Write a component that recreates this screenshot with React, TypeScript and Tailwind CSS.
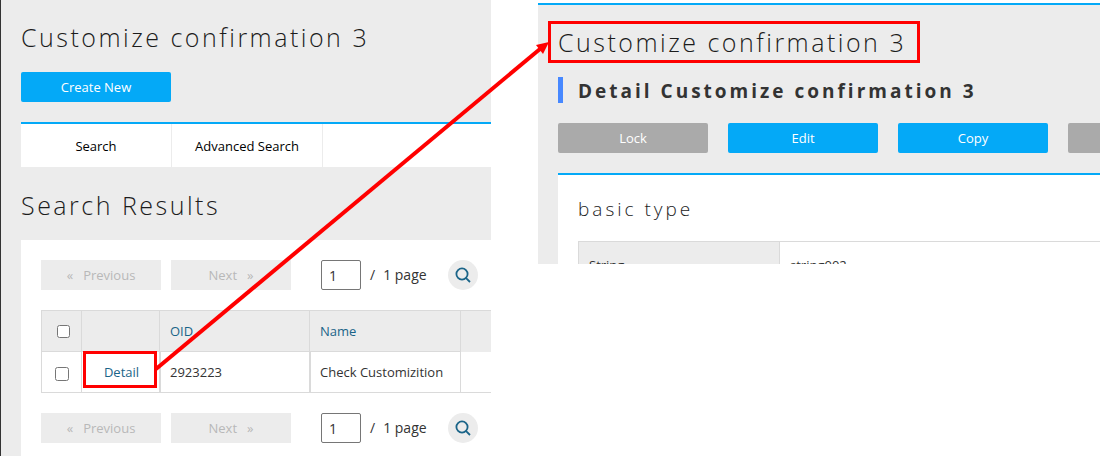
import type { ReactNode } from "react";

function PageTitle({ children }: { children: ReactNode }) {
  return (
    <h1 className="text-[25px] leading-8 font-light tracking-widest whitespace-nowrap text-[#1c1c1c]">
      {children}
    </h1>
  );
}

function ActionButton({ children, muted = false }: { children: ReactNode; muted?: boolean }) {
  return (
    <button
      type="button"
      className={`h-[30px] w-[150px] shrink-0 rounded-[2px] pt-0.5 text-[13px] text-white ${muted ? "bg-[#aaa]" : "bg-[#04a9f7]"}`}
    >
      {children}
    </button>
  );
}

function Pager({ id }: { id: string }) {
  return (
    <nav aria-label={`Pages ${id}`} className="flex h-[30px] items-center text-[13px]">
      <button type="button" disabled className="flex h-[30px] w-[120px] items-center justify-center gap-[10px] bg-[#ececec] pt-0.5 text-[#b8b8b8]">
        <span>«</span>
        <span>Previous</span>
      </button>
      <button type="button" disabled className="ml-[10px] flex h-[30px] w-[120px] items-center justify-center gap-[10px] bg-[#ececec] pt-0.5 text-[#b8b8b8]">
        <span>Next</span>
        <span>»</span>
      </button>
      <input
        id={`page-${id}`}
        type="text"
        aria-label="Page number"
        defaultValue="1"
        className="ml-[30px] h-[30px] w-10 rounded-[2px] border border-[#767676] bg-white px-[7px] text-sm text-[#333]"
      />
      <label htmlFor={`page-${id}`} className="ml-[9px] flex w-[78px] gap-2 text-sm whitespace-nowrap text-[#333]">
        <span>/</span>
        <span>1 page</span>
      </label>
      <button type="button" aria-label="Go to page" className="flex size-[30px] items-center justify-center rounded-full bg-[#ececec]">
        <svg viewBox="0 0 16 16" className="size-4 fill-none stroke-[#1a6488]" strokeWidth="1.8">
          <circle cx="7" cy="7" r="5.6" />
          <path d="M10.6 10.6L15 15" />
        </svg>
      </button>
    </nav>
  );
}

function ListScreen() {
  return (
    <section className="flex min-h-screen min-w-0 flex-col overflow-hidden border-l border-[#333] bg-[#ececec] pl-5">
      <div className="pt-[21px]">
        <PageTitle>Customize confirmation 3</PageTitle>
      </div>
      <div className="mt-[19px] flex">
        <ActionButton>Create New</ActionButton>
      </div>
      <div className="mt-5 flex border-t-2 border-[#04a9f7] bg-white text-[13px] text-black">
        <button type="button" className="h-[43px] w-[151px] border-r border-[#ececec] pt-0.5">Search</button>
        <button type="button" className="h-[43px] w-[151px] border-r border-[#ececec] pt-0.5">Advanced Search</button>
      </div>
      <h2 className="mt-[22px] text-[25px] leading-8 font-light tracking-widest text-[#1c1c1c]">Search Results</h2>
      <div className="mt-[19px] grow bg-white pt-5 pl-5">
        <Pager id="top" />
        <table className="my-5 w-full table-fixed border-separate border-spacing-0 border-t border-l border-[#dadada] text-left text-[13px] text-[#333]">
          <colgroup>
            <col className="w-10" />
            <col className="w-[78px]" />
            <col className="w-[150px]" />
            <col className="w-[151px]" />
            <col />
          </colgroup>
          <thead>
            <tr className="h-[41px] bg-[#ececec] text-[#1a6488]">
              <th className="border-r border-b border-[#dadada] pl-1 text-center">
                <input type="checkbox" aria-label="Select all rows" className="mx-auto block size-[13px]" />
              </th>
              <th className="border-r border-b border-[#dadada]" />
              <th className="border-r border-b border-[#dadada] pt-0.5 pl-[10px] font-normal">OID</th>
              <th className="border-r border-b border-[#dadada] pt-0.5 pl-[10px] font-normal">Name</th>
              <th />
            </tr>
          </thead>
          <tbody>
            <tr className="h-[41px]">
              <td className="border-r border-b border-[#dadada] pt-1">
                <input type="checkbox" aria-label="Select row 2923223" className="mx-auto block size-[14px]" />
              </td>
              <td className="relative border-r border-b border-[#dadada] pt-0.5 pl-0.5 text-center">
                <a href="#detail" className="text-[#1a6488]">Detail</a>
                <span className="pointer-events-none absolute -top-px right-[2px] bottom-1 left-px border-3 border-[#f00]" />
              </td>
              <td className="border-r border-b border-l border-[#dadada] pt-0.5 pl-[9px]">2923223</td>
              <td className="border-r border-b border-l border-[#dadada] pt-0.5 pl-[9px] whitespace-nowrap">Check Customizition</td>
              <td className="border-b border-[#dadada]" />
            </tr>
          </tbody>
        </table>
        <Pager id="bottom" />
      </div>
    </section>
  );
}

function DetailScreen() {
  return (
    <section id="detail" className="mt-[3px] h-[261px] min-w-0 overflow-hidden border-t-2 border-[#04a9f7] bg-[#ececec] pl-5">
      <div className="flex pt-[21px]">
        <div className="relative">
          <PageTitle>Customize confirmation 3</PageTitle>
          <span className="pointer-events-none absolute -top-[5px] -right-[14px] -bottom-[5px] -left-[10px] border-3 border-[#f00]" />
        </div>
      </div>
      <h2 className="mt-[19px] border-l-5 border-[#4788ff] pt-0.5 pl-[15px] text-[19px] leading-6 font-bold tracking-[3px] whitespace-nowrap text-[#333]">
        Detail Customize confirmation 3
      </h2>
      <div className="mt-5 flex gap-5">
        <ActionButton muted>Lock</ActionButton>
        <ActionButton>Edit</ActionButton>
        <ActionButton>Copy</ActionButton>
        <ActionButton muted>{null}</ActionButton>
      </div>
      <div className="mt-5 border-t-2 border-[#04a9f7] bg-white pt-[22px] pl-5">
        <h3 className="text-[19px] leading-6 font-light tracking-[3px] text-[#1c1c1c]">basic type</h3>
        <table className="mt-5 w-full table-fixed border-collapse text-left text-[13px] text-[#333]">
          <tbody>
            <tr className="h-[46px]">
              <th className="w-[201px] border border-[#dadada] bg-[#ececec] pt-0.5 pl-[10px] font-normal">String</th>
              <td className="border-t border-[#dadada] pt-0.5 pl-[10px]">string002</td>
            </tr>
          </tbody>
        </table>
      </div>
    </section>
  );
}

export default function App() {
  return (
    <main className="relative grid min-h-screen grid-cols-[491fr_562fr] gap-[47px] overflow-hidden bg-white font-['Open_Sans','Noto_Sans',sans-serif]">
      <ListScreen />
      <DetailScreen />
      <svg viewBox="0 0 1100 456" className="pointer-events-none absolute top-0 left-0 w-full" aria-hidden="true">
        <path d="M156 369L540 49" stroke="#f00" strokeWidth="4" />
        <path d="M549 42L536 45L543 54Z" fill="#f00" />
      </svg>
    </main>
  );
}
